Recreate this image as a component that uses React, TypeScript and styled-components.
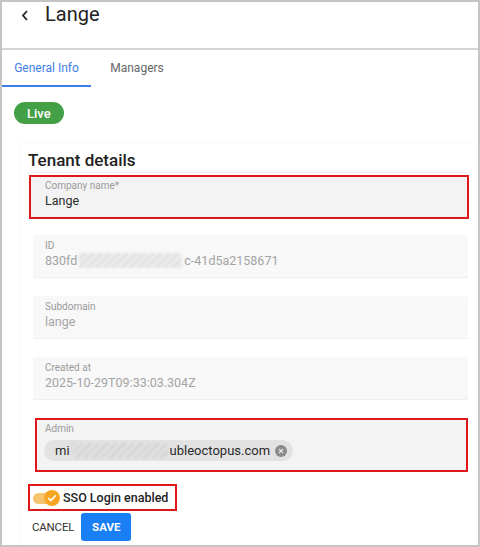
import React from "react";
import styled, { createGlobalStyle } from "styled-components";

const Global = createGlobalStyle`
  html, body { margin: 0; padding: 0; background: #ffffff; }
  body { font-family: Roboto, "Noto Sans", Arial, sans-serif; }
  * { box-sizing: border-box; }
`;

const Frame = styled.div`
  width: 480px;
  height: 547px;
  border: 2px solid #c4c4c4;
  overflow: hidden;
  display: flex;
  flex-direction: column;
  background: #fff;
  & > * { flex-shrink: 0; }
`;

const Header = styled.header`
  height: 48px;
  border-bottom: 2px solid #d4d4d4;
  display: flex;
  align-items: flex-start;
  gap: 14px;
  padding: 0 0 0 17px;
`;

const BackButton = styled.button`
  border: 0;
  background: none;
  padding: 0;
  margin-top: 7px;
  width: 12px;
  height: 12px;
  display: flex;
  align-items: center;
  justify-content: center;
  color: #222;
  cursor: pointer;
`;

const Title = styled.h1`
  margin: 0;
  font-size: 20px;
  font-weight: 400;
  line-height: 24px;
  color: #222;
`;

const Tabs = styled.nav`
  display: flex;
  height: 37px;
`;

const Tab = styled.div<{ $active?: boolean }>`
  width: ${(p) => (p.$active ? "89px" : "92px")};
  display: flex;
  align-items: center;
  justify-content: center;
  padding-top: ${(p) => (p.$active ? "1px" : "0")};
  font-size: 12px;
  color: ${(p) => (p.$active ? "#3f7ee6" : "#666")};
  border-bottom: 2px solid ${(p) => (p.$active ? "#3f7ee6" : "transparent")};
`;

const Content = styled.main`
  display: flex;
  flex-direction: column;
  align-items: flex-start;
  padding: 15px 0 0 12px;
  & > * { flex-shrink: 0; }
`;

const StatusChip = styled.span`
  height: 22px;
  padding: 0 13px;
  border-radius: 11px;
  background: #43a047;
  color: #fff;
  font-size: 13px;
  font-weight: 500;
  display: flex;
  align-items: center;
`;

const Card = styled.section`
  margin: 19px 0 0 6px;
  width: 456px;
  display: flex;
  flex-direction: column;
  padding: 0 8px 20px 13px;
  border-radius: 4px;
  box-shadow: 0 0 3px rgba(0, 0, 0, 0.06);
  & > * { flex-shrink: 0; }
`;

const CardTitle = styled.h2`
  margin: 0 0 0 -5px;
  height: 30px;
  display: flex;
  align-items: center;
  padding-top: 5px;
  font-size: 17px;
  font-weight: 500;
  color: #222;
  border-bottom: 1px solid #f2f2f2;
`;

const Highlight = styled.div<{ $mt: number; $ml: number; $mr: number }>`
  margin: ${(p) => `${p.$mt}px ${p.$mr}px 0 ${p.$ml}px`};
  border: 2px solid #e0161b;
  display: flex;
  flex-direction: column;
`;

const Field = styled.div<{ $mt?: number; $pt?: number; $pl?: number; $bg?: string; $h?: number }>`
  margin: ${(p) => `${p.$mt ?? 0}px 0 0 0`};
  height: ${(p) => p.$h ?? 43}px;
  padding: ${(p) => `${p.$pt ?? 5}px 12px 0 ${p.$pl ?? 12}px`};
  background: ${(p) => p.$bg ?? "#f8f8f8"};
  border-bottom: 1px solid #efefef;
  border-radius: 3px 3px 0 0;
  display: flex;
  flex-direction: column;
  align-items: flex-start;
`;

const Label = styled.label`
  font-size: 10px;
  line-height: 12px;
  color: #9a9a9a;
`;

const Value = styled.div<{ $muted?: boolean }>`
  font-size: 12.5px;
  line-height: 17px;
  color: ${(p) => (p.$muted ? "#a4a4a4" : "#2a2a2a")};
  display: flex;
  align-items: center;
  white-space: nowrap;
`;

/* blurred patch hiding part of a value */
const Smudge = styled.span<{ $w: number; $tone?: string }>`
  display: inline-block;
  width: ${(p) => p.$w}px;
  height: 15px;
  margin: 0 2px;
  background: repeating-linear-gradient(
    135deg,
    ${(p) => p.$tone ?? "#ececec"} 0 3px,
    #e2e2e2 3px 6px
  );
  filter: blur(1.2px);
`;

const EmailChip = styled.span`
  margin: 5px 0 0 -1px;
  height: 21px;
  width: 249px;
  border-radius: 11px;
  background: #e2e2e2;
  display: flex;
  align-items: center;
  padding: 0 6px 0 11px;
  font-size: 13px;
  color: #2a2a2a;
  white-space: nowrap;
`;

const ChipRemove = styled.span`
  margin-left: auto;
  width: 12px;
  height: 12px;
  border-radius: 50%;
  background: #8a8a8a;
  display: flex;
  align-items: center;
  justify-content: center;
`;

const SsoRow = styled.div`
  margin: 12px 0 0 -5px;
  width: 149px;
  height: 27px;
  border: 2px solid #e0161b;
  display: flex;
  align-items: center;
  padding-left: 3px;
  gap: 3px;
`;

const Toggle = styled.span`
  position: relative;
  width: 27px;
  height: 16px;
  display: inline-block;
`;

const Track = styled.span`
  position: absolute;
  left: 0;
  top: 3px;
  width: 23px;
  height: 11px;
  border-radius: 6px;
  background: #f6c46f;
`;

const Thumb = styled.span`
  position: absolute;
  right: 0;
  top: 0;
  width: 16px;
  height: 16px;
  border-radius: 50%;
  background: #f6a623;
  display: flex;
  align-items: center;
  justify-content: center;
`;

const SsoText = styled.span`
  font-size: 12.5px;
  font-weight: 500;
  color: #222;
`;

const Actions = styled.div`
  margin: 2px 0 0 -1px;
  display: flex;
  align-items: center;
  gap: 7px;
`;

const TextButton = styled.button`
  border: 0;
  background: none;
  padding: 0;
  font-family: inherit;
  font-size: 11.5px;
  color: #333;
  letter-spacing: -0.2px;
`;

const PrimaryButton = styled.button`
  border: 0;
  width: 50px;
  height: 28px;
  border-radius: 3px;
  background: #1a7ef5;
  color: #fff;
  font-family: inherit;
  font-size: 11.5px;
  font-weight: 700;
`;

export default function App() {
  return (
    <>
      <Global />
      <Frame>
        <Header>
          <BackButton aria-label="Back">
            <svg width="8" height="11" viewBox="0 0 8 11">
              <path d="M6 1 L2 5.5 L6 10" fill="none" stroke="#222" strokeWidth="1.8" />
            </svg>
          </BackButton>
          <Title>Lange</Title>
        </Header>
        <Tabs>
          <Tab $active>General Info</Tab>
          <Tab>Managers</Tab>
        </Tabs>
        <Content>
          <StatusChip>Live</StatusChip>
          <Card>
            <CardTitle>Tenant details</CardTitle>
            <Highlight $mt={2} $ml={-4} $mr={-1}>
              <Field $bg="#f3f3f3" $pt={3} $pl={14} $h={40}>
                <Label>Company name*</Label>
                <Value>Lange</Value>
              </Field>
            </Highlight>
            <Field $mt={16} $pt={5}>
              <Label>ID</Label>
              <Value $muted>
                830fd
                <Smudge $w={103} />
                c-41d5a2158671
              </Value>
            </Field>
            <Field $mt={18}>
              <Label>Subdomain</Label>
              <Value $muted>lange</Value>
            </Field>
            <Field $mt={18}>
              <Label>Created at</Label>
              <Value $muted>2025-10-29T09:33:03.304Z</Value>
            </Field>
            <Highlight $mt={18} $ml={2} $mr={0}>
              <Field $bg="#f3f3f3" $pt={3} $pl={8} $h={50}>
                <Label>Admin</Label>
                <EmailChip>
                  mi
                  <Smudge $w={96} $tone="#d6d6d6" />
                  ubleoctopus.com
                  <ChipRemove>
                    <svg width="6" height="6" viewBox="0 0 6 6">
                      <path d="M1 1 L5 5 M5 1 L1 5" stroke="#e2e2e2" strokeWidth="1.4" />
                    </svg>
                  </ChipRemove>
                </EmailChip>
              </Field>
            </Highlight>
            <SsoRow>
              <Toggle>
                <Track />
                <Thumb>
                  <svg width="10" height="8" viewBox="0 0 10 8">
                    <path d="M1.2 4 L3.8 6.5 L8.8 1.3" fill="none" stroke="#fff" strokeWidth="1.6" />
                  </svg>
                </Thumb>
              </Toggle>
              <SsoText>SSO Login enabled</SsoText>
            </SsoRow>
            <Actions>
              <TextButton>CANCEL</TextButton>
              <PrimaryButton>SAVE</PrimaryButton>
            </Actions>
          </Card>
        </Content>
      </Frame>
    </>
  );
}
